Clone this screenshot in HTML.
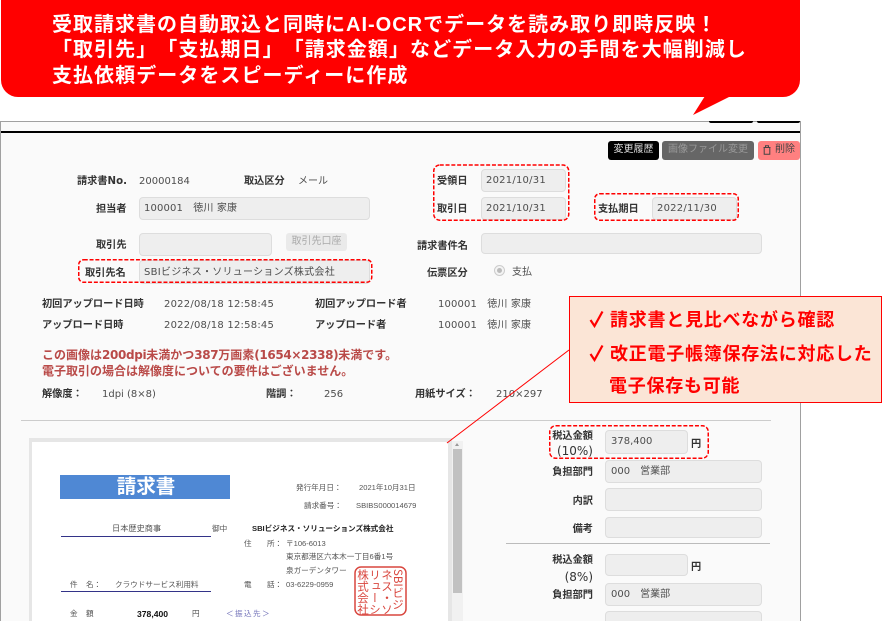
<!DOCTYPE html>
<html lang="ja"><head><meta charset="utf-8"><style>
html,body{margin:0;padding:0;background:#fff}
#p{position:relative;width:884px;height:621px;overflow:hidden;background:#fff;font-family:"DejaVu Sans","Noto Sans CJK JP",sans-serif;font-size:10px;color:#555;text-spacing-trim:space-all}
#p div{position:absolute;box-sizing:border-box;white-space:nowrap}
.l{color:#333;font-weight:700;line-height:16px;height:16px;font-size:10.2px;margin-top:1px}
.v{line-height:16px;height:16px;color:#4d4d4d;margin-top:1px}
.dt{letter-spacing:.23px}
.i{background:#eee;border:1.5px solid #ddd;border-radius:4px;line-height:20px;padding:1px 0 0 4px;color:#4d4d4d}
.b{font-family:"Liberation Sans","Noto Sans CJK JP",sans-serif;font-size:20px;line-height:25px;color:#fff;font-weight:700;letter-spacing:1px}
.c{font-family:"Liberation Sans","Noto Sans CJK JP",sans-serif;font-size:18px;line-height:24px;color:#f00;font-weight:700;letter-spacing:.75px}
.e{font-family:"Liberation Sans","Noto Sans CJK JP",sans-serif;font-size:7.6px;line-height:12px;color:#555;margin-top:1px}
.n{letter-spacing:-.35px}
</style></head><body><div id="p">
<div style="left:0;top:121px;width:801px;height:505px;background:#fafafa;border:1px solid #a0a0a0"></div>
<div style="left:1px;top:131px;width:799px;height:2px;background:#000"></div>
<div style="left:709px;top:121px;width:44px;height:2px;background:#000;border-radius:0 0 3px 3px"></div>
<div style="left:757px;top:121px;width:43px;height:2px;background:#000;border-radius:0 0 3px 3px"></div>

<div style="left:1px;top:-20px;width:799px;height:117px;background:#f00;border-radius:17px"></div>
<svg style="position:absolute;left:0;top:0" width="884" height="121"><polygon points="705,96 693,115 731,96" fill="#f00"/></svg>
<div class="b" style="left:52px;top:13px">受取請求書の自動取込と同時にAI-OCRでデータを読み取り即時反映！</div>
<div class="b" style="left:52px;top:38px;letter-spacing:1.06px">「取引先」「支払期日」「請求金額」などデータ入力の手間を大幅削減し</div>
<div class="b" style="left:52px;top:64px;letter-spacing:1.05px">支払依頼データをスピーディーに作成</div>

<div style="left:608px;top:141px;width:51px;height:19px;background:#000;border-radius:3px;color:#ddd;text-align:center;line-height:18px">変更履歴</div>
<div style="left:662px;top:141px;width:92px;height:19px;background:#666;border-radius:3px;color:#999;text-align:center;line-height:18px">画像ファイル変更</div>
<div style="left:758px;top:141px;width:42px;height:19px;background:#ff8080;border-radius:3px;color:#444;line-height:18px;padding-left:17px">削除</div>
<svg style="position:absolute;left:763px;top:145px" width="8" height="10" fill="none" stroke="#444" stroke-width="1"><path d="M0.5 2.5H7.5M2.5 2.5V0.7H5.5V2.5M1.2 2.5V9.3H6.8V2.5"/></svg>

<div class="l" style="left:77px;top:173px">請求書No.</div><div class="v" style="left:139px;top:173px">20000184</div>
<div class="l" style="left:244px;top:173px">取込区分</div><div class="v" style="left:298px;top:173px">メール</div>
<div class="l" style="left:437px;top:173px">受領日</div><div class="i dt" style="left:481px;top:169px;width:85px;height:23px">2021/10/31</div>
<div class="l" style="left:437px;top:201px">取引日</div><div class="i dt" style="left:481px;top:197px;width:85px;height:23px">2021/10/31</div>
<div class="l" style="left:598px;top:201px">支払期日</div><div class="i dt" style="left:652px;top:197px;width:85px;height:23px">2022/11/30</div>
<div class="l" style="left:96px;top:201px">担当者</div><div class="i" style="left:139px;top:197px;width:231px;height:23px;letter-spacing:.15px">100001　徳川 家康</div>
<div class="l" style="left:96px;top:237px">取引先</div><div class="i" style="left:139px;top:233px;width:133px;height:23px"></div>
<div style="left:286px;top:233px;width:61px;height:18px;background:#eaeaea;border-radius:3px;color:#aaa;text-align:center;line-height:17px">取引先口座</div>
<div class="l" style="left:85px;top:265px">取引先名</div><div class="i" style="left:139px;top:260px;width:231px;height:24px;padding-top:2px;letter-spacing:.26px">SBIビジネス・ソリューションズ株式会社</div>
<div class="l" style="left:417px;top:238px">請求書件名</div><div class="i" style="left:481px;top:233px;width:281px;height:21px"></div>
<div class="l" style="left:427px;top:265px">伝票区分</div>
<div style="left:494px;top:265px;width:11px;height:11px;border:1px solid #ccc;border-radius:50%;background:#f4f4f4"></div><div style="left:497px;top:268px;width:5px;height:5px;border-radius:50%;background:#bbb"></div>
<div class="v" style="left:512px;top:264px">支払</div>

<div class="l" style="left:42px;top:296px">初回アップロード日時</div><div class="v dt" style="left:164px;top:296px">2022/08/18 12:58:45</div>
<div class="l" style="left:315px;top:296px">初回アップロード者</div><div class="v" style="left:438px;top:296px;letter-spacing:.15px">100001　徳川 家康</div>
<div class="l" style="left:42px;top:317px">アップロード日時</div><div class="v dt" style="left:164px;top:317px">2022/08/18 12:58:45</div>
<div class="l" style="left:315px;top:317px">アップロード者</div><div class="v" style="left:438px;top:317px;letter-spacing:.15px">100001　徳川 家康</div>
<div style="left:42px;top:347px;font-size:12px;line-height:16px;color:#b94a48;font-weight:700">この画像は<span class="n">200dpi</span>未満かつ<span class="n">387</span>万画素<span class="n">(1654×2338)</span>未満です。<br>電子取引の場合は解像度についての要件はございません。</div>
<div class="l" style="left:42px;top:386px">解像度：</div><div class="v" style="left:102px;top:386px">1dpi (8×8)</div>
<div class="l" style="left:266px;top:386px">階調：</div><div class="v" style="left:324px;top:386px">256</div>
<div class="l" style="left:415px;top:386px">用紙サイズ：</div><div class="v" style="left:496px;top:386px">210×297</div>
<div style="left:21px;top:420px;width:750px;height:1px;background:#ccc"></div>

<div style="left:29px;top:438px;width:423px;height:190px;background:#e6e6e6"></div>
<div style="left:32px;top:442px;width:416px;height:185px;background:#fff"></div>
<div style="left:452px;top:441px;width:11px;height:180px;background:#f1f1f1"></div>
<div style="left:453px;top:449px;width:9px;height:144px;background:#c1c1c1"></div>
<div style="left:455px;top:443px;width:0;height:0;border-left:2.5px solid transparent;border-right:2.5px solid transparent;border-bottom:3px solid #999"></div>

<div style="left:60px;top:475px;width:170px;height:24px;background:#4f88d4;color:#fff;font-family:'Liberation Sans','Noto Sans CJK JP',sans-serif;font-size:19.5px;line-height:24px;text-align:center;font-weight:700;padding-left:2px">請求書</div>
<div class="e" style="left:296px;top:481px">発行年月日：</div><div class="e" style="left:359px;top:481px">2021年10月31日</div>
<div class="e" style="left:304px;top:499px">請求番号：</div><div class="e" style="left:356px;top:499px">SBIBS000014679</div>
<div class="e" style="left:112px;top:522px;font-size:8.2px">日本歴史商事</div><div class="e" style="left:212px;top:522px">御中</div>
<div style="left:61px;top:536px;width:150px;height:1px;background:#338"></div>
<div class="e" style="left:252px;top:522px;font-weight:700;color:#222">SBIビジネス・ソリューションズ株式会社</div>
<div class="e" style="left:244px;top:537px">住</div><div class="e" style="left:267px;top:537px">所：</div><div class="e" style="left:286px;top:537px">〒106-6013</div>
<div class="e" style="left:286px;top:550px">東京都港区六本木一丁目6番1号</div>
<div class="e" style="left:286px;top:564px">泉ガーデンタワー</div>
<div class="e" style="left:244px;top:578px">電</div><div class="e" style="left:267px;top:578px">話：</div><div class="e" style="left:286px;top:578px">03-6229-0959</div>
<div class="e" style="left:70px;top:578px">件</div><div class="e" style="left:86px;top:578px">名：</div><div class="e" style="left:115px;top:578px">クラウドサービス利用料</div>
<div style="left:61px;top:591px;width:150px;height:1px;background:#338"></div>
<div class="e" style="left:70px;top:607px">金</div><div class="e" style="left:86px;top:607px">額</div>
<div class="e" style="left:137px;top:607px;font-weight:700;color:#111;font-size:8.6px">378,400</div><div class="e" style="left:192px;top:607px">円</div>
<div class="e" style="left:226px;top:607px;color:#77b;letter-spacing:1.4px">＜振込先＞</div>
<svg style="position:absolute;left:354px;top:566px" width="53" height="50" font-family="Noto Sans CJK JP,sans-serif" font-size="11.5" fill="#d9473f"><rect x="1" y="1" width="51" height="48" rx="6" fill="none" stroke="#d9473f" stroke-width="1.5"/>
<text x="44" y="3" writing-mode="tb">SBIビジ</text>
<text x="33" y="3" writing-mode="tb">ネス・ソ</text>
<text x="21" y="3" writing-mode="tb">リューシ</text>
<text x="9" y="3" writing-mode="tb">株式会社</text></svg>

<div class="l" style="left:540px;top:428px;width:53px;text-align:right;height:32px;line-height:15px">税込金額<br><span style="font-size:12px;font-weight:400">(10%)</span></div>
<div class="i" style="left:605px;top:430px;width:83px;height:24px;padding-left:5px">378,400</div><div class="l" style="left:691px;top:436px">円</div>
<div class="l" style="left:540px;top:464px;width:53px;text-align:right">負担部門</div><div class="i" style="left:605px;top:460px;width:157px;height:23px;padding-left:5px">000　営業部</div>
<div class="l" style="left:540px;top:493px;width:53px;text-align:right">内訳</div><div class="i" style="left:605px;top:488px;width:157px;height:23px"></div>
<div class="l" style="left:540px;top:521px;width:53px;text-align:right">備考</div><div class="i" style="left:605px;top:517px;width:157px;height:21px"></div>
<div style="left:506px;top:543px;width:264px;height:1px;background:#bbb"></div>
<div class="l" style="left:540px;top:552px;width:53px;text-align:right;height:32px">税込金額<br><span style="font-size:12px;font-weight:400">(8%)</span></div>
<div class="i" style="left:605px;top:554px;width:83px;height:22px"></div><div class="l" style="left:691px;top:559px">円</div>
<div class="l" style="left:540px;top:587px;width:53px;text-align:right">負担部門</div><div class="i" style="left:605px;top:583px;width:157px;height:23px;padding-left:5px">000　営業部</div>
<div class="i" style="left:605px;top:611px;width:157px;height:24px"></div>

<svg style="position:absolute;left:0;top:0" width="884" height="621" fill="none" stroke="#f00"><g stroke-width="1.5" stroke-dasharray="4 1.8"><rect x="433.75" y="165" width="135" height="55.25" rx="6"/><rect x="594.75" y="193.75" width="143.5" height="26.5" rx="5"/><rect x="78.75" y="259.75" width="293" height="22.5" rx="5"/><rect x="549.75" y="425.75" width="158.5" height="32.5" rx="6"/></g><line x1="569" y1="350" x2="447" y2="443" stroke-width="1"/></svg>
<div style="left:569px;top:296px;width:313px;height:107px;background:#fbe5d6;border:1px solid #f00"></div>
<svg style="position:absolute;left:589px;top:310px" width="16" height="18" fill="none" stroke="#f00" stroke-width="2.2"><path d="M1.5 10L5.5 16L13.5 1.5"/></svg>
<svg style="position:absolute;left:589px;top:344px" width="16" height="18" fill="none" stroke="#f00" stroke-width="2.2"><path d="M1.5 10L5.5 16L13.5 1.5"/></svg>
<div class="c" style="left:610px;top:308px">請求書と見比べながら確認</div>
<div class="c" style="left:610px;top:342px">改正電子帳簿保存法に対応した</div>
<div class="c" style="left:609px;top:374px">電子保存も可能</div>
</div></body></html>
